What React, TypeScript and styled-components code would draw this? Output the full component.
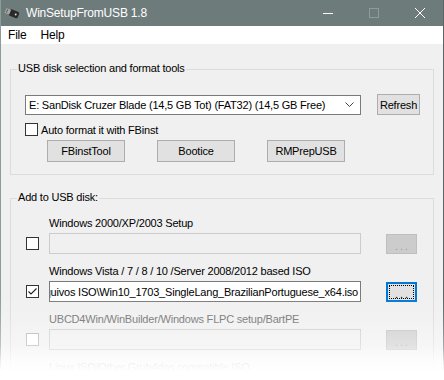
import React from 'react';
import styled, { createGlobalStyle, css } from 'styled-components';

const GlobalStyle = createGlobalStyle`
  html, body {
    margin: 0;
    padding: 0;
    background: #fff;
  }
  body {
    font-family: "Liberation Sans", Arial, sans-serif;
    font-size: 11px;
    letter-spacing: -0.2px;
    color: #000;
  }
`

const Frame = styled.div`
  position: relative;
  width: 444px;
  height: 380px;
  overflow: hidden;
`

const Window = styled.div`
  width: 444px;
  height: 380px;
  box-sizing: border-box;
  overflow: hidden;
  display: flex;
  flex-direction: column;
  background: #f0f0f0;
  border-left: 1px solid #8f9a9a;
  border-right: 1px solid #5a6565;
`

const TitleBar = styled.div`
  height: 26px;
  flex: none;
  display: flex;
  align-items: center;
  background: #6e7b7b;
  color: #fff;
  font-size: 12px;
`

const TitleIcon = styled.svg`
  margin: 0 6px 0 3px;
  flex: none;
`

const WindowButtons = styled.div`
  margin-left: auto;
  display: flex;
`

const WinButton = styled.div`
  width: 46px;
  height: 26px;
  display: flex;
  align-items: center;
  justify-content: center;
`

const MenuBar = styled.div`
  height: 18px;
  flex: none;
  display: flex;
  align-items: center;
  background: #fff;
  font-size: 12px;
`

const MenuItem = styled.span`
  padding: 0 7px;
  line-height: 18px;
`

const Body = styled.div`
  display: flex;
  flex-direction: column;
  padding: 17px 9px 0 9px;
`

const GroupBox = styled.fieldset<{ $top?: number }>`
  margin: ${p => p.$top ?? 0}px 0 0 0;
  padding: 0;
  border: 1px solid #dcdcdc;
  min-width: 0;
`

const Legend = styled.legend`
  margin-left: 6px;
  padding: 0 1px 3px 1px;
  line-height: 14px;
`

const GroupContent = styled.div<{ $pad: string }>`
  display: flex;
  flex-direction: column;
  padding: ${p => p.$pad};
`

const Row = styled.div<{ $gap?: number; $indent?: number; $top?: number }>`
  display: flex;
  align-items: center;
  gap: ${p => p.$gap ?? 0}px;
  padding-left: ${p => p.$indent ?? 0}px;
  margin-top: ${p => p.$top ?? 0}px;
`

const Combo = styled.div`
  width: 336px;
  height: 20px;
  box-sizing: border-box;
  border: 1px solid #7a7a7a;
  background: #fff;
  display: flex;
  align-items: center;
  padding: 0 6px 0 3px;
  white-space: nowrap;
`

const ComboText = styled.span`
  flex: 1;
  line-height: 18px;
`

const Button = styled.div<{ $w: number; $h?: number; $disabled?: boolean; $focused?: boolean }>`
  width: ${p => p.$w}px;
  height: ${p => p.$h ?? 22}px;
  box-sizing: border-box;
  display: flex;
  align-items: center;
  justify-content: center;
  background: #e1e1e1;
  border: 1px solid #adadad;
  white-space: nowrap;
  ${p => p.$disabled && css`
    background: #cccccc;
    border-color: #bfbfbf;
    color: #a0a0a0;
  `}
  ${p => p.$focused && css`
    border: 2px solid #0078d7;
    padding: 1px;
  `}
`

const FocusRing = styled.div`
  flex: 1;
  align-self: stretch;
  display: flex;
  align-items: center;
  justify-content: center;
  border: 1px dotted #000;
`

const Dots = styled.span`
  letter-spacing: 2px;
  padding-left: 2px;
  line-height: 10px;
  padding-top: 4px;
`

const CheckBox = styled.div<{ $disabled?: boolean }>`
  width: 13px;
  height: 13px;
  box-sizing: border-box;
  border: 1px solid ${p => (p.$disabled ? '#b0b0b0' : '#333')};
  background: #fff;
  display: flex;
  align-items: center;
  justify-content: center;
  flex: none;
`

const Items = styled.div`
  display: flex;
  flex-direction: column;
  gap: 10px;
`

const Item = styled.div`
  display: grid;
  grid-template-columns: 13px 312px 46px;
  grid-template-rows: 14px 21px;
  column-gap: 10px;
  row-gap: 3px;
`

const ItemLabel = styled.div<{ $disabled?: boolean }>`
  grid-column: 2 / 4;
  grid-row: 1;
  line-height: 14px;
  white-space: nowrap;
  color: ${p => (p.$disabled ? '#6d6d6d' : '#000')};
`

const ItemCheck = styled.div`
  grid-column: 1;
  grid-row: 2;
  align-self: center;
`

const PathBox = styled.div<{ $disabled?: boolean }>`
  grid-column: 2;
  grid-row: 2;
  box-sizing: border-box;
  border: 1px solid ${p => (p.$disabled ? '#cccccc' : '#7a7a7a')};
  background: ${p => (p.$disabled ? '#f0f0f0' : '#fff')};
  display: flex;
  justify-content: flex-end;
  align-items: center;
  overflow: hidden;
  padding: 0 2px;
  white-space: nowrap;
`

const ItemButton = styled.div`
  grid-column: 3;
  grid-row: 2;
  justify-self: end;
  align-self: center;
`

const Fade = styled.div`
  position: absolute;
  left: 0;
  right: 0;
  bottom: 0;
  height: 85px;
  pointer-events: none;
  background: linear-gradient(
    to bottom,
    rgba(255, 255, 255, 0) 0%,
    rgba(255, 255, 255, 0.15) 29%,
    rgba(255, 255, 255, 0.42) 59%,
    rgba(255, 255, 255, 0.88) 80%,
    #fff 90%
  );
`

const Check = () => (
  <svg width="11" height="11" viewBox="0 0 11 11">
    <polyline points="1.5,5.5 4,8 9.5,2.5" fill="none" stroke="#222" strokeWidth="1.1" />
  </svg>
)

interface SourceProps {
  label: string;
  checked?: boolean;
  disabled?: boolean;
  path?: string;
  focused?: boolean;
  buttonOff?: boolean;
  labelOff?: boolean;
}

const Source: React.FC<SourceProps> = ({ label, checked, disabled, path, focused, buttonOff, labelOff }) => (
  <Item>
    <ItemLabel $disabled={labelOff}>{label}</ItemLabel>
    <ItemCheck>
      <CheckBox $disabled={disabled}>{checked && <Check />}</CheckBox>
    </ItemCheck>
    <PathBox $disabled={!path}>{path}</PathBox>
    <ItemButton>
      <Button $w={31} $h={20} $disabled={buttonOff} $focused={focused}>
        {focused ? (
          <FocusRing>
            <Dots>...</Dots>
          </FocusRing>
        ) : (
          <Dots>...</Dots>
        )}
      </Button>
    </ItemButton>
  </Item>
)

export default function App() {
  return (
    <>
      <GlobalStyle />
      <Frame>
        <Window>
          <TitleBar>
            <TitleIcon width="16" height="14" viewBox="0 0 16 14">
              <g transform="rotate(22 8 7)">
                <rect x="5" y="3.5" width="10" height="7" rx="2" fill="#2a2a2a" />
                <rect x="1" y="4.5" width="5" height="5" rx="0.5" fill="#a8a8a8" />
                <rect x="2" y="5.5" width="1.4" height="1.2" fill="#555" />
                <rect x="2" y="7.4" width="1.4" height="1.2" fill="#555" />
                <circle cx="12" cy="7" r="1" fill="#d8d8d8" />
              </g>
            </TitleIcon>
            WinSetupFromUSB 1.8
            <WindowButtons>
              <WinButton>
                <svg width="10" height="10" viewBox="0 0 10 10">
                  <line x1="0" y1="5.5" x2="10" y2="5.5" stroke="#fff" strokeWidth="1" />
                </svg>
              </WinButton>
              <WinButton>
                <svg width="10" height="10" viewBox="0 0 10 10">
                  <rect x="0.5" y="0.5" width="9" height="9" fill="none" stroke="#8f9b9b" strokeWidth="1" />
                </svg>
              </WinButton>
              <WinButton>
                <svg width="10" height="10" viewBox="0 0 10 10">
                  <path d="M0 0 L10 10 M10 0 L0 10" stroke="#fff" strokeWidth="1" />
                </svg>
              </WinButton>
            </WindowButtons>
          </TitleBar>
          <MenuBar>
            <MenuItem>File</MenuItem>
            <MenuItem>Help</MenuItem>
          </MenuBar>
          <Body>
            <GroupBox>
              <Legend>USB disk selection and format tools</Legend>
              <GroupContent $pad="16px 12px 12px 14px">
                <Row $gap={16}>
                  <Combo>
                    <ComboText>E: SanDisk Cruzer Blade (14,5 GB Tot) (FAT32) (14,5 GB Free)</ComboText>
                    <svg width="9" height="5" viewBox="0 0 9 5">
                      <polyline points="0.5,0.5 4.5,4.5 8.5,0.5" fill="none" stroke="#444" strokeWidth="1" />
                    </svg>
                  </Combo>
                  <Button $w={43} $h={21}>Refresh</Button>
                </Row>
                <Row $gap={3} $top={8}>
                  <CheckBox />
                  <span>Auto format it with FBinst</span>
                </Row>
                <Row $gap={32} $indent={22} $top={4}>
                  <Button $w={78}>FBinstTool</Button>
                  <Button $w={78}>Bootice</Button>
                  <Button $w={78}>RMPrepUSB</Button>
                </Row>
              </GroupContent>
            </GroupBox>
            <GroupBox $top={15}>
              <Legend>Add to USB disk:</Legend>
              <GroupContent $pad="9px 12px 40px 15px">
                <Items>
                  <Source label="Windows 2000/XP/2003 Setup" buttonOff />
                  <Source
                    label="Windows Vista / 7 / 8 / 10 /Server 2008/2012 based ISO"
                    checked
                    path="D:\Downloads\Arquivos ISO\Win10_1703_SingleLang_BrazilianPortuguese_x64.iso"
                    focused
                  />
                  <Source label="UBCD4Win/WinBuilder/Windows FLPC setup/BartPE" disabled buttonOff labelOff />
                  <Source label="Linux ISO/Other Grub4dos compatible ISO" disabled buttonOff labelOff />
                </Items>
              </GroupContent>
            </GroupBox>
          </Body>
        </Window>
        <Fade />
      </Frame>
    </>
  );
}
